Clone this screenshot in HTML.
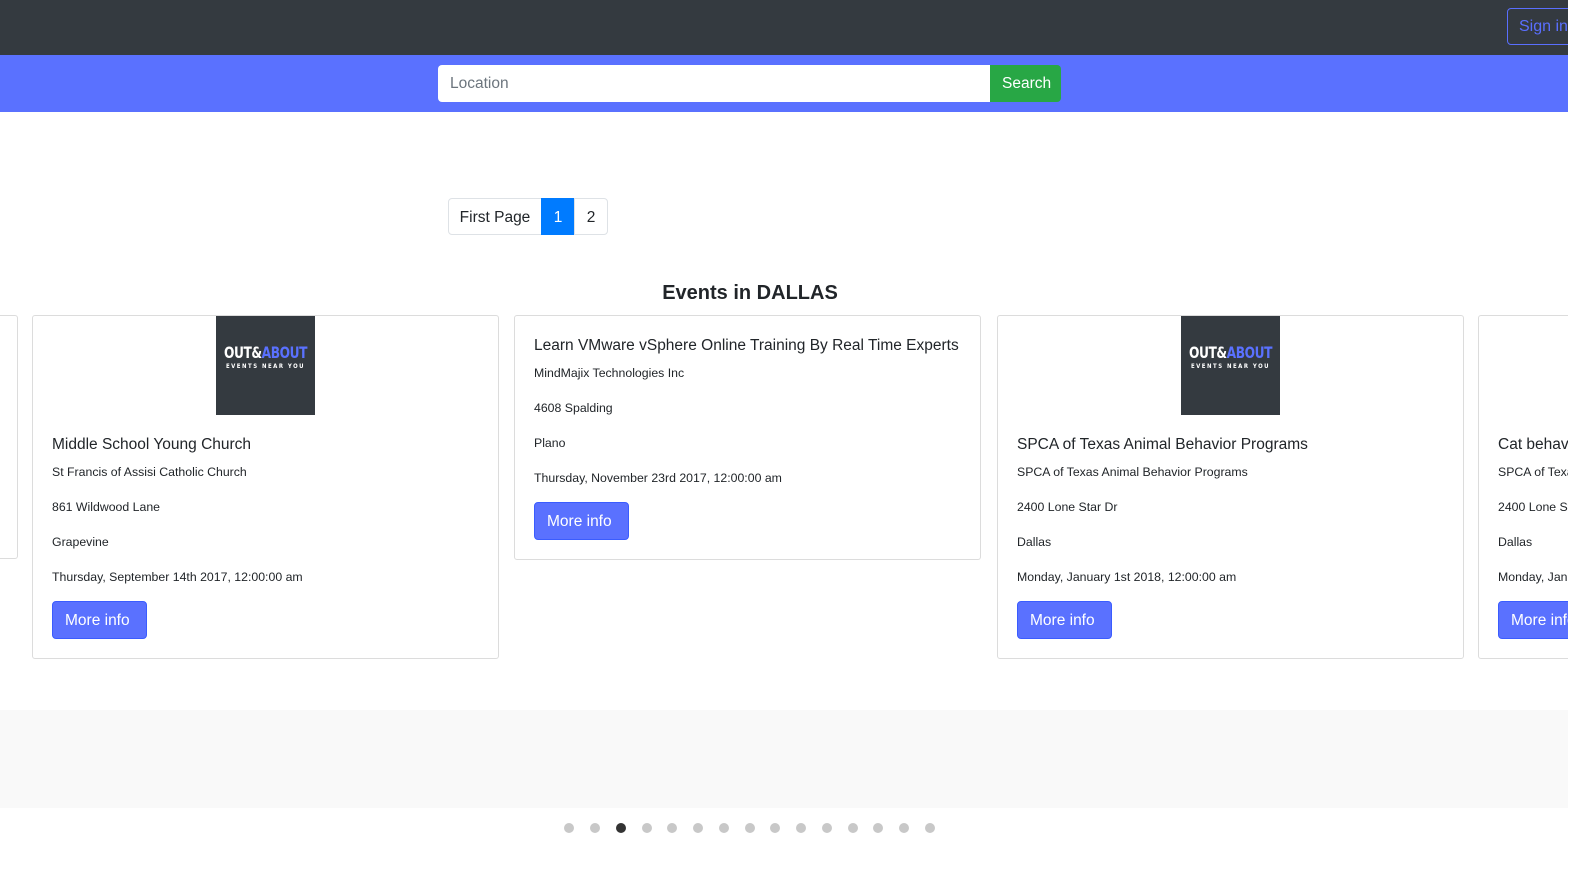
<!DOCTYPE html>
<html><head><style>
*{box-sizing:border-box;margin:0;padding:0}
body{width:1583px;height:875px;overflow:hidden;background:#fff;font-family:"Liberation Sans",sans-serif;color:#212529;position:relative}
.a{position:absolute}
.nav{left:0;top:0;width:1583px;height:55px;background:#343a40}
.signin{left:1507px;top:8px;width:90px;height:37px;border:1px solid #5a6fff;border-radius:4px;color:#5a6fff;font-size:16px;padding:9px 11px;white-space:nowrap}
.band{left:0;top:55px;width:1583px;height:57px;background:#5a71ff}
.loc{left:438px;top:65px;width:552px;height:37px;background:#fff;border-radius:4px 0 0 4px;color:#6c757d;font-size:15.5px;padding:10px 12px}
.srch{left:990px;top:65px;width:71px;height:37px;background:#28a745;color:#fff;font-size:15.5px;padding:10px 12px;border-radius:0 4px 4px 0}
.pg{top:198px;height:37px;border:1px solid #dee2e6;font-size:15.5px;padding:10px 0;text-align:center;color:#212529;white-space:nowrap}
h2{position:absolute;left:0;width:1500px;top:282px;text-align:center;font-size:20px;font-weight:bold}
.gray{left:0;top:710px;width:1583px;height:98px;background:#f9f9f9}
.col{top:315px;height:395px;background:#fff}
.card{top:315px;border:1px solid #dcdcdc;border-radius:3px;background:#fff}
.logo{width:99px;height:99px;background:#343a40;color:#fff;text-align:center;font-family:"DejaVu Sans Condensed","Liberation Sans Narrow",sans-serif;font-weight:bold}
.logo b{display:block;margin-top:27px;font-size:16px;letter-spacing:-0.5px;transform:scaleX(0.85)}
.logo b span{color:#5a71ff}
.logo i{display:block;font-style:normal;font-size:6px;letter-spacing:1.5px;margin-top:1px}
.t{font-size:15.5px;position:absolute;white-space:nowrap}
.s{font-size:12.3px;position:absolute;white-space:nowrap}
.btn{position:absolute;background:#5a71ff;border:1px solid #3a5cff;color:#fff;border-radius:4px;font-size:15.5px;padding:10px 12px;width:95px;height:38px;white-space:nowrap}
.dot{top:823px;width:10px;height:10px;border-radius:50%;background:#c8c8c8}
</style></head><body>
<div class="a nav"></div>
<div class="a signin">Sign in</div>
<div class="a band"></div>
<div class="a loc">Location</div>
<div class="a srch">Search</div>
<div class="a pg" style="left:448px;width:94px;border-radius:4px 0 0 4px">First Page</div>
<div class="a pg" style="left:541px;width:34px;background:#007bff;border-color:#007bff;color:#fff">1</div>
<div class="a pg" style="left:574px;width:34px;border-radius:0 4px 4px 0">2</div>
<h2>Events in DALLAS</h2>
<div class="a gray"></div>
<div class="a col" style="left:0;width:18px"></div>
<div class="a col" style="left:32px;width:467px"></div>
<div class="a col" style="left:514px;width:467px"></div>
<div class="a col" style="left:997px;width:467px"></div>
<div class="a col" style="left:1478px;width:110px"></div>
<div class="a card" style="left:-10px;width:28px;height:244px"></div>

<div class="a card" style="left:32px;width:467px;height:344px">
<div class="a logo" style="left:183px;top:0"><b>OUT&amp;<span>ABOUT</span></b><i>EVENTS NEAR YOU</i></div>
<div class="t" style="left:19px;top:120px">Middle School Young Church</div>
<div class="s" style="left:19px;top:149px">St Francis of Assisi Catholic Church</div>
<div class="s" style="left:19px;top:184px">861 Wildwood Lane</div>
<div class="s" style="left:19px;top:219px">Grapevine</div>
<div class="s" style="left:19px;top:254px">Thursday, September 14th 2017, 12:00:00 am</div>
<div class="btn" style="left:19px;top:285px">More info</div>
</div>

<div class="a card" style="left:514px;width:467px;height:245px">
<div class="t" style="left:19px;top:21px">Learn VMware vSphere Online Training By Real Time Experts</div>
<div class="s" style="left:19px;top:50px">MindMajix Technologies Inc</div>
<div class="s" style="left:19px;top:85px">4608 Spalding</div>
<div class="s" style="left:19px;top:120px">Plano</div>
<div class="s" style="left:19px;top:155px">Thursday, November 23rd 2017, 12:00:00 am</div>
<div class="btn" style="left:19px;top:186px">More info</div>
</div>

<div class="a card" style="left:997px;width:467px;height:344px">
<div class="a logo" style="left:183px;top:0"><b>OUT&amp;<span>ABOUT</span></b><i>EVENTS NEAR YOU</i></div>
<div class="t" style="left:19px;top:120px">SPCA of Texas Animal Behavior Programs</div>
<div class="s" style="left:19px;top:149px">SPCA of Texas Animal Behavior Programs</div>
<div class="s" style="left:19px;top:184px">2400 Lone Star Dr</div>
<div class="s" style="left:19px;top:219px">Dallas</div>
<div class="s" style="left:19px;top:254px">Monday, January 1st 2018, 12:00:00 am</div>
<div class="btn" style="left:19px;top:285px">More info</div>
</div>

<div class="a card" style="left:1478px;width:200px;height:344px;overflow:hidden">
<div class="t" style="left:19px;top:120px">Cat behavior</div>
<div class="s" style="left:19px;top:149px">SPCA of Texas</div>
<div class="s" style="left:19px;top:184px">2400 Lone Star</div>
<div class="s" style="left:19px;top:219px">Dallas</div>
<div class="s" style="left:19px;top:254px">Monday, January</div>
<div class="btn" style="left:19px;top:285px">More info</div>
</div>
<div class="a" style="left:1568px;top:0;width:15px;height:875px;background:#fff"></div>

<div class="a dot" style="left:564px"></div>
<div class="a dot" style="left:590px"></div>
<div class="a dot" style="left:616px;background:#333"></div>
<div class="a dot" style="left:642px"></div>
<div class="a dot" style="left:667px"></div>
<div class="a dot" style="left:693px"></div>
<div class="a dot" style="left:719px"></div>
<div class="a dot" style="left:745px"></div>
<div class="a dot" style="left:770px"></div>
<div class="a dot" style="left:796px"></div>
<div class="a dot" style="left:822px"></div>
<div class="a dot" style="left:848px"></div>
<div class="a dot" style="left:873px"></div>
<div class="a dot" style="left:899px"></div>
<div class="a dot" style="left:925px"></div>
</body></html>
